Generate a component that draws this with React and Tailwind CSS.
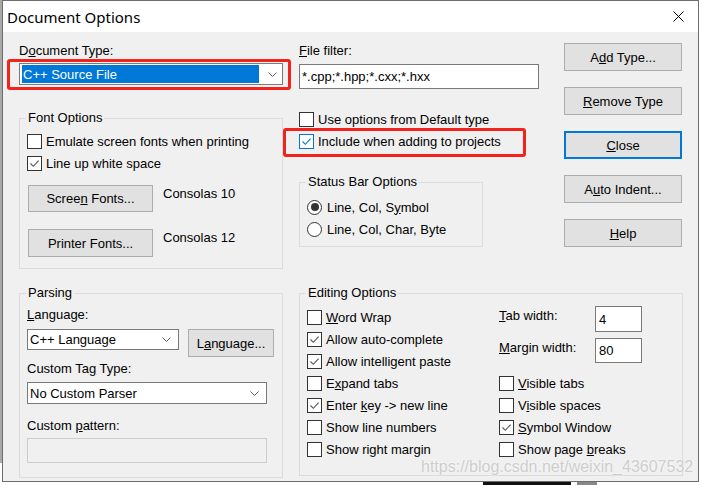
import React from "react";

function Box({ checked, blue }) {
  return (
    <span
      className={`w-[15px] h-[15px] border bg-white flex items-center justify-center shrink-0 ${
        blue ? "border-[#0078d7]" : "border-[#333333]"
      }`}
    >
      {checked && (
        <svg width="11" height="11" viewBox="0 0 11 11">
          <path
            d="M1.5 5.5 L4.3 8.3 L9.6 2.6"
            fill="none"
            stroke={blue ? "#0078d7" : "#555555"}
            strokeWidth="1.1"
          />
        </svg>
      )}
    </span>
  );
}

function Check({ checked, blue, children }) {
  return (
    <div className="h-[22px] flex items-center gap-[4px]">
      <Box checked={checked} blue={blue} />
      <span>{children}</span>
    </div>
  );
}

function Radio({ on, children }) {
  return (
    <div className="h-[22px] flex items-center gap-[5px]">
      <span className="w-[15px] h-[15px] rounded-full border border-[#333333] bg-white flex items-center justify-center shrink-0">
        {on && <span className="w-[8px] h-[8px] rounded-full bg-[#333333]" />}
      </span>
      <span>{children}</span>
    </div>
  );
}

function Chevron() {
  return (
    <svg width="9" height="5" viewBox="0 0 9 5" className="shrink-0">
      <polyline points="0.5,0.5 4.5,4.5 8.5,0.5" fill="none" stroke="#606060" strokeWidth="1" />
    </svg>
  );
}

function Btn({ className, focus, children }) {
  return (
    <div
      className={`bg-[#e1e1e1] flex items-center justify-center ${
        focus ? "border-2 border-[#0078d7]" : "border border-[#adadad]"
      } ${className}`}
    >
      {children}
    </div>
  );
}

export default function App() {
  return (
    <div className="w-[702px] h-[485px] bg-white flex flex-col font-['Liberation_Sans',Arial,sans-serif] text-[13px] leading-[15px] text-black overflow-hidden">
      <div className="flex">
        <div className="w-[2px] h-[463px] bg-[#a9a9a9]" />
        <div className="w-[697px] h-[482px] border border-[#6d6d6d] flex flex-col">
          {/* title bar */}
          <div className="h-[31px] bg-white flex items-center justify-between pl-[4px] pr-[14px]">
            <span className="font-['Noto_Sans',sans-serif] text-[15px] leading-[18px]">Document Options</span>
            <svg width="11" height="11" viewBox="0 0 11 11">
              <path d="M0.5 0.5 L10.5 10.5 M10.5 0.5 L0.5 10.5" stroke="#000" strokeWidth="1" />
            </svg>
          </div>
          {/* body */}
          <div className="relative flex-1 bg-[#f0f0f0] pl-[16px]">
            {/* top section */}
            <div className="flex">
              {/* left col */}
              <div className="w-[264px] flex flex-col">
                <div className="mt-[11px]">
                  D<u>o</u>cument Type:
                </div>
                <div className="relative mt-[5px]">
                  <div className="h-[22px] w-[264px] border border-[#7a7a7a] bg-white flex items-center pl-[2px]">
                    <div className="w-[237px] h-[18px] bg-[#0078d7] text-white leading-[19px] pl-[1px]">
                      C++ Source File
                    </div>
                    <span className="ml-[9px]">
                      <Chevron />
                    </span>
                  </div>
                  <div className="absolute left-[-12px] top-[-4px] w-[284px] h-[31px] border-[3px] border-[#f2221c] rounded-[3px]" />
                </div>
                <fieldset className="mt-[25px] h-[159px] border border-[#dcdcdc]">
                  <legend className="ml-[6px] px-[2px] leading-[16px]">Font Options</legend>
                  <div className="pl-[7px] flex flex-col">
                    <div className="mt-[4px]">
                      <Check>Emulate screen fonts when printing</Check>
                      <Check checked>Line up white space</Check>
                    </div>
                    <div className="mt-[11px] flex items-start">
                      <Btn className="ml-[1px] w-[125px] h-[27px]">
                        <span>
                          Scree<u>n</u> Fonts...
                        </span>
                      </Btn>
                      <span className="ml-[10px] mt-[1px]">Consolas 10</span>
                    </div>
                    <div className="mt-[17px] flex items-start">
                      <Btn className="ml-[1px] w-[125px] h-[28px]">Printer Fonts...</Btn>
                      <span className="ml-[10px] mt-[1px]">Consolas 12</span>
                    </div>
                  </div>
                </fieldset>
              </div>
              {/* middle col */}
              <div className="ml-[16px] w-[240px] flex flex-col">
                <div className="mt-[11px]">
                  <u>F</u>ile filter:
                </div>
                <div className="mt-[6px] h-[25px] border border-[#7a7a7a] bg-white flex items-center pl-[2px]">
                  *.cpp;*.hpp;*.cxx;*.hxx
                </div>
                <div className="mt-[19px]">
                  <Check>Use options from Default type</Check>
                  <div className="relative">
                    <Check checked blue>
                      Include when adding to projects
                    </Check>
                    <div className="absolute left-[-16px] top-[-2px] w-[243px] h-[29px] border-[3px] border-[#f2221c] rounded-[3px]" />
                  </div>
                </div>
                <fieldset className="mt-[22px] w-[184px] h-[73px] border border-[#dcdcdc]">
                  <legend className="ml-[6px] px-[2px] leading-[16px]">Status Bar Options</legend>
                  <div className="pl-[7px] pt-[6px]">
                    <Radio on>
                      Line, Col, S<u>y</u>mbol
                    </Radio>
                    <Radio>Line, Col, Char, Byte</Radio>
                  </div>
                </fieldset>
              </div>
              {/* right col */}
              <div className="ml-[25px] w-[118px] flex flex-col gap-[16px] pt-[11px]">
                <Btn className="h-[28px]">
                  <span>
                    A<u>d</u>d Type...
                  </span>
                </Btn>
                <Btn className="h-[28px]">
                  <span>
                    <u>R</u>emove Type
                  </span>
                </Btn>
                <Btn focus className="h-[28px]">
                  <span>
                    <u>C</u>lose
                  </span>
                </Btn>
                <Btn className="h-[28px]">
                  <span>
                    A<u>u</u>to Indent...
                  </span>
                </Btn>
                <Btn className="h-[28px]">
                  <span>
                    <u>H</u>elp
                  </span>
                </Btn>
              </div>
            </div>
            {/* bottom section */}
            <div className="flex mt-[16px]">
              <fieldset className="w-[264px] h-[193px] border border-[#dcdcdc]">
                <legend className="ml-[6px] px-[2px] leading-[16px]">Parsing</legend>
                <div className="pl-[7px] flex flex-col">
                  <div className="mt-[6px]">
                    <u>L</u>anguage:
                  </div>
                  <div className="mt-[7px] flex items-start">
                    <div className="w-[152px] h-[21px] border border-[#7a7a7a] bg-white flex items-center justify-between pl-[2px] pr-[7px]">
                      <span>C++ Language</span>
                      <Chevron />
                    </div>
                    <Btn className="ml-[9px] w-[86px] h-[28px]">
                      <span>
                        L<u>a</u>nguage...
                      </span>
                    </Btn>
                  </div>
                  <div className="mt-[4px]">
                    Custom Ta<u>g</u> Type:
                  </div>
                  <div className="mt-[6px] w-[240px] h-[22px] border border-[#7a7a7a] bg-white flex items-center justify-between pl-[2px] pr-[7px]">
                    <span>No Custom Parser</span>
                    <Chevron />
                  </div>
                  <div className="mt-[14px]">
                    Custom <u>p</u>attern:
                  </div>
                  <div className="mt-[5px] w-[240px] h-[25px] border border-[#cccccc] bg-[#f0f0f0]" />
                </div>
              </fieldset>
              <fieldset className="ml-[16px] w-[384px] h-[191px] border border-[#dcdcdc]">
                <legend className="ml-[6px] px-[2px] leading-[16px]">Editing Options</legend>
                <div className="flex pt-[5px]">
                  <div className="w-[199px] pl-[7px]">
                    <Check>
                      <u>W</u>ord Wrap
                    </Check>
                    <Check checked>Allow auto-complete</Check>
                    <Check checked>Allow intelligent paste</Check>
                    <Check>
                      E<u>x</u>pand tabs
                    </Check>
                    <Check checked>
                      Enter <u>k</u>ey -&gt; new line
                    </Check>
                    <Check>Show line numbers</Check>
                    <Check>Show right margin</Check>
                  </div>
                  <div className="flex-1 flex flex-col">
                    <div className="flex items-start h-[26px]">
                      <span className="w-[96px] mt-[2px]">
                        <u>T</u>ab width:
                      </span>
                      <div className="w-[47px] h-[26px] border border-[#7a7a7a] bg-white flex items-center pl-[3px]">
                        4
                      </div>
                    </div>
                    <div className="mt-[6px] flex items-start h-[25px]">
                      <span className="w-[96px] mt-[2px]">
                        <u>M</u>argin width:
                      </span>
                      <div className="w-[47px] h-[25px] border border-[#7a7a7a] bg-white flex items-center pl-[3px]">
                        80
                      </div>
                    </div>
                    <div className="mt-[9px]">
                      <Check>
                        <u>V</u>isible tabs
                      </Check>
                      <Check>
                        V<u>i</u>sible spaces
                      </Check>
                      <Check checked>
                        <u>S</u>ymbol Window
                      </Check>
                      <Check>
                        Show page <u>b</u>reaks
                      </Check>
                    </div>
                  </div>
                </div>
              </fieldset>
            </div>
            {/* watermark */}
            <div className="absolute left-[418px] top-[426px] text-[16px] leading-[18px] text-[#cdcdcd] [text-shadow:0_0_2px_#ffffff]">
              https://blog.csdn.net/weixin_43607532
            </div>
          </div>
        </div>
      </div>
      <div className="flex h-[3px]">
        <div className="ml-[483px] w-[88px] h-[3px] bg-[#111111]" />
        <div className="ml-[6px] w-[20px] h-[3px] bg-[#888888]" />
      </div>
    </div>
  );
}
